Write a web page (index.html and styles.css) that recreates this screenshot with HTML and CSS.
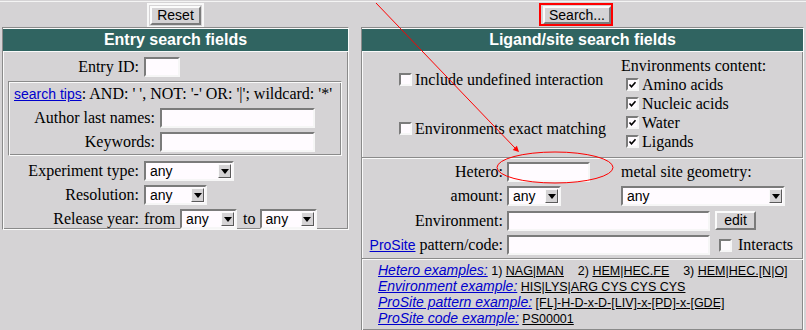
FILE: index.html
```html
<!DOCTYPE html>
<html lang="en">
<head>
<meta charset="utf-8">
<title>Search</title>
<link rel="stylesheet" href="styles.css">
</head>
<body>
<div class="page">
  <div class="col col-left">
    <div class="btnbar">
      <span class="defring"><button class="btn btn-reset" type="button">Reset</button></span>
    </div>
    <div class="panel panel-left">
      <div class="hdr">Entry search fields</div>
      <div class="frow first">
        <span class="flbl">Entry ID:</span>
        <input class="inp w-entry" type="text">
      </div>
      <div class="tips groove">
        <div class="tipline"><a class="lnk" href="#">search tips</a>: AND: ' ', NOT: '-' OR: '|'; wildcard: '*'</div>
        <div class="trow"><span class="tlbl">Author last names:</span><input class="inp w-author" type="text"></div>
        <div class="trow"><span class="tlbl">Keywords:</span><input class="inp w-author" type="text"></div>
      </div>
      <div class="frow after-tips">
        <span class="flbl">Experiment type:</span>
        <span class="sel w-exp"><span class="sv">any</span><span class="arr"></span></span>
      </div>
      <div class="frow">
        <span class="flbl">Resolution:</span>
        <span class="sel w-res"><span class="sv">any</span><span class="arr"></span></span>
      </div>
      <div class="frow">
        <span class="flbl">Release year:</span>
        <span class="from">from</span>
        <span class="sel w-year"><span class="sv">any</span><span class="arr"></span></span>
        <span class="to">to</span>
        <span class="sel w-year"><span class="sv">any</span><span class="arr"></span></span>
      </div>
    </div>
  </div>

  <div class="col col-right">
    <div class="btnbar btnbar-right">
      <button class="btn btn-search" type="button">Search...</button>
    </div>
    <div class="panel panel-right">
      <div class="hdr">Ligand/site search fields</div>
      <div class="rtop">
        <div class="rtop-left">
          <div class="ck-row"><span class="cb"></span>Include undefined interaction</div>
          <div class="ck-row"><span class="cb"></span>Environments exact matching</div>
        </div>
        <div class="rtop-right">
          <div class="ec-title">Environments content:</div>
          <div class="ck-row"><span class="cb"><svg class="tick" viewBox="0 0 9 9" width="9" height="9"><path d="M1.5 4.5 L3.5 6.8 L7.5 2.2" fill="none" stroke="#000" stroke-width="1.6"/></svg></span>Amino acids</div>
          <div class="ck-row"><span class="cb"><svg class="tick" viewBox="0 0 9 9" width="9" height="9"><path d="M1.5 4.5 L3.5 6.8 L7.5 2.2" fill="none" stroke="#000" stroke-width="1.6"/></svg></span>Nucleic acids</div>
          <div class="ck-row"><span class="cb"><svg class="tick" viewBox="0 0 9 9" width="9" height="9"><path d="M1.5 4.5 L3.5 6.8 L7.5 2.2" fill="none" stroke="#000" stroke-width="1.6"/></svg></span>Water</div>
          <div class="ck-row"><span class="cb"><svg class="tick" viewBox="0 0 9 9" width="9" height="9"><path d="M1.5 4.5 L3.5 6.8 L7.5 2.2" fill="none" stroke="#000" stroke-width="1.6"/></svg></span>Ligands</div>
        </div>
      </div>
      <div class="rmid">
        <div class="mrow">
          <span class="mlbl">Hetero:</span>
          <input class="inp w-het" type="text">
          <span class="metal">metal site geometry:</span>
        </div>
        <div class="mrow">
          <span class="mlbl">amount:</span>
          <span class="sel w-amt"><span class="sv">any</span><span class="arr"></span></span>
          <span class="sel w-metal"><span class="sv">any</span><span class="arr"></span></span>
        </div>
        <div class="mrow">
          <span class="mlbl">Environment:</span>
          <input class="inp w-env" type="text">
          <button class="btn btn-edit" type="button">edit</button>
        </div>
        <div class="mrow">
          <span class="mlbl"><a class="lnk" href="#">ProSite</a> pattern/code:</span>
          <input class="inp w-env" type="text">
          <span class="cb cb-int"></span>
          <span class="int">Interacts</span>
        </div>
      </div>
      <div class="rbot">
        <div class="exl"><a class="exlink" href="#">Hetero examples:</a> 1) <a class="exv" href="#">NAG|MAN</a>    2) <a class="exv" href="#">HEM|HEC.FE</a>    3) <a class="exv" href="#">HEM|HEC.[N|O]</a></div>
        <div class="exl"><a class="exlink" href="#">Environment example:</a> <a class="exv" href="#">HIS|LYS|ARG CYS CYS CYS</a></div>
        <div class="exl"><a class="exlink" href="#">ProSite pattern example:</a> <a class="exv" href="#">[FL]-H-D-x-D-[LIV]-x-[PD]-x-[GDE]</a></div>
        <div class="exl"><a class="exlink" href="#">ProSite code example:</a> <a class="exv" href="#">PS00001</a></div>
      </div>
    </div>
  </div>
</div>

<svg class="annot" width="806" height="330" viewBox="0 0 806 330">
  <rect x="540" y="4" width="72" height="21" fill="none" stroke="#ff0000" stroke-width="2"/>
  <line x1="376" y1="3" x2="515" y2="148" stroke="#ff0000" stroke-width="1"/>
  <polygon points="519,152 512.7,149.9 516.9,145.7" fill="#ff0000"/>
  <ellipse cx="555" cy="167.5" rx="58" ry="15.5" fill="none" stroke="#ff0000" stroke-width="1"/>
</svg>
</body>
</html>
```

FILE: styles.css
```css
* { box-sizing: border-box; }

html, body {
  margin: 0;
  padding: 0;
}

body {
  position: relative;
  width: 806px;
  height: 330px;
  overflow: hidden;
  background: #d5d3d5;
  font-family: "Liberation Serif", "Times New Roman", serif;
  font-size: 16px;
  color: #000;
}

.page {
  display: flex;
  gap: 12px;
  margin-top: 1px;
  padding-left: 2px;
  border-top: 1px solid #f4f4f4;
}

.col { flex: none; display: flex; flex-direction: column; }
.col-left { width: 347px; }
.col-right { width: 443px; }

.btnbar {
  height: 25px;
  display: flex;
  justify-content: center;
  align-items: flex-start;
}
.btnbar-right { padding-right: 11px; }

.defring {
  display: flex;
  margin-top: 1px;
  padding: 1px;
  border: 2px solid #f8f8f8;
}

.btn {
  margin: 0;
  padding: 0;
  height: 19px;
  font-family: "Liberation Sans", Arial, sans-serif;
  font-size: 14px;
  line-height: 15px;
  color: #000;
  background: #d5d3d5;
  border: 2px solid;
  border-color: #fbfbfb #7b7b7b #7b7b7b #fbfbfb;
}
.btn-reset { width: 51px; }
.btn-search { width: 68px; height: 18px; margin-top: 4px; }
.btn-edit { width: 41px; height: 19px; margin-left: 5px; }

.panel, .groove {
  border: 1px solid;
  border-color: #8a8a8a #fafafa #fafafa #8a8a8a;
  box-shadow: inset 1px 1px 0 #fafafa, inset -1px -1px 0 #8a8a8a;
}

.panel-right {
  height: 303px;
  overflow: hidden;
  border-bottom: none;
}

.hdr {
  margin-top: 1px;
  height: 23px;
  background: #306461;
  border-bottom: 1px solid #fafafa;
  color: #fff;
  font-family: "Liberation Sans", Arial, sans-serif;
  font-weight: bold;
  font-size: 16px;
  line-height: 22px;
  text-align: center;
}

/* left panel */
.frow {
  display: flex;
  align-items: center;
  height: 20px;
  margin-top: 4px;
  white-space: nowrap;
}
.frow.first { margin-top: 5px; }
.frow.after-tips { margin-top: 5px; }
.flbl {
  width: 136px;
  margin-right: 5px;
  text-align: right;
}
.from { margin-right: 5px; }
.to { margin: 0 4px 0 6px; }

.tips {
  margin: 4px 6px 0 5px;
  padding: 2px 5px 3px;
}
.tipline {
  height: 20px;
  line-height: 20px;
  white-space: nowrap;
}
.trow {
  display: flex;
  align-items: center;
  height: 20px;
  margin-top: 4px;
  white-space: nowrap;
}
.tlbl {
  width: 141px;
  margin-right: 5px;
  text-align: right;
}

.lnk {
  font-family: "Liberation Sans", Arial, sans-serif;
  font-size: 14px;
  color: #0000cc;
  text-decoration: underline;
}

/* form controls */
.inp {
  height: 20px;
  margin: 0;
  padding: 0;
  border: 2px solid;
  border-color: #7b7b7b #f6f6f6 #f6f6f6 #7b7b7b;
  background: #fffbff;
  outline: none;
}
.w-entry { width: 36px; }
.w-author { width: 155px; }
.w-het { width: 83px; }
.w-env { width: 203px; }

.sel {
  display: inline-flex;
  align-items: center;
  justify-content: space-between;
  height: 20px;
  padding-left: 4px;
  border: 2px solid;
  border-color: #7b7b7b #f6f6f6 #f6f6f6 #7b7b7b;
  background: #fffbff;
  font-family: "Liberation Sans", Arial, sans-serif;
  font-size: 14px;
}
.sv { line-height: 16px; }
.arr {
  display: flex;
  align-items: center;
  justify-content: center;
  width: 13px;
  height: 14px;
  margin-right: 1px;
  background: #d5d3d5;
  border: 1px solid;
  border-color: #fafafa #5a5a5a #5a5a5a #fafafa;
}
.arr::after {
  content: "";
  border-left: 4px solid transparent;
  border-right: 4px solid transparent;
  border-top: 5px solid #000;
}
.w-exp { width: 90px; }
.w-res { width: 63px; }
.w-year { width: 57px; }
.w-amt { width: 54px; }
.w-metal { width: 164px; margin-left: 60px; }

.cb {
  flex: none;
  display: inline-flex;
  align-items: center;
  justify-content: center;
  width: 13px;
  height: 13px;
  margin-right: 3px;
  border: 2px solid;
  border-color: #7b7b7b #f6f6f6 #f6f6f6 #7b7b7b;
  background: #fffbff;
}
.tick { display: block; }

/* right panel */
.rtop {
  display: flex;
  height: 106px;
  border-bottom: 1px solid #8a8a8a;
}
.rtop-left {
  width: 259px;
  padding: 18px 0 0 37px;
  display: flex;
  flex-direction: column;
  gap: 30px;
}
.rtop-right { padding-top: 4px; }
.ck-row {
  display: flex;
  align-items: center;
  height: 19px;
  white-space: nowrap;
}
.rtop-right .ck-row { padding-left: 5px; }
.ec-title {
  height: 19px;
  line-height: 19px;
  white-space: nowrap;
}

.rmid {
  display: flex;
  flex-direction: column;
  gap: 4.4px;
  padding: 3px 0 3px;
  border-top: 1px solid #fafafa;
  border-bottom: 1px solid #8a8a8a;
}
.mrow {
  display: flex;
  align-items: center;
  height: 20px;
  white-space: nowrap;
}
.mlbl {
  width: 141px;
  margin-right: 4px;
  text-align: right;
}
.metal { margin-left: 31px; }
.cb-int { margin-left: 9px; margin-right: 6px; }

.rbot {
  border-top: 1px solid #fafafa;
  padding: 2px 0 0 16px;
  font-family: "Liberation Sans", Arial, sans-serif;
  font-size: 12.5px;
  line-height: 16px;
}
.exl {
  height: 16px;
  white-space: pre;
}
.exlink {
  font-size: 14px;
  color: #0000cc;
  font-style: italic;
  text-decoration: underline;
}
.exv {
  color: #000;
  text-decoration: underline;
}

.annot {
  position: absolute;
  left: 0;
  top: 0;
  pointer-events: none;
}
```
